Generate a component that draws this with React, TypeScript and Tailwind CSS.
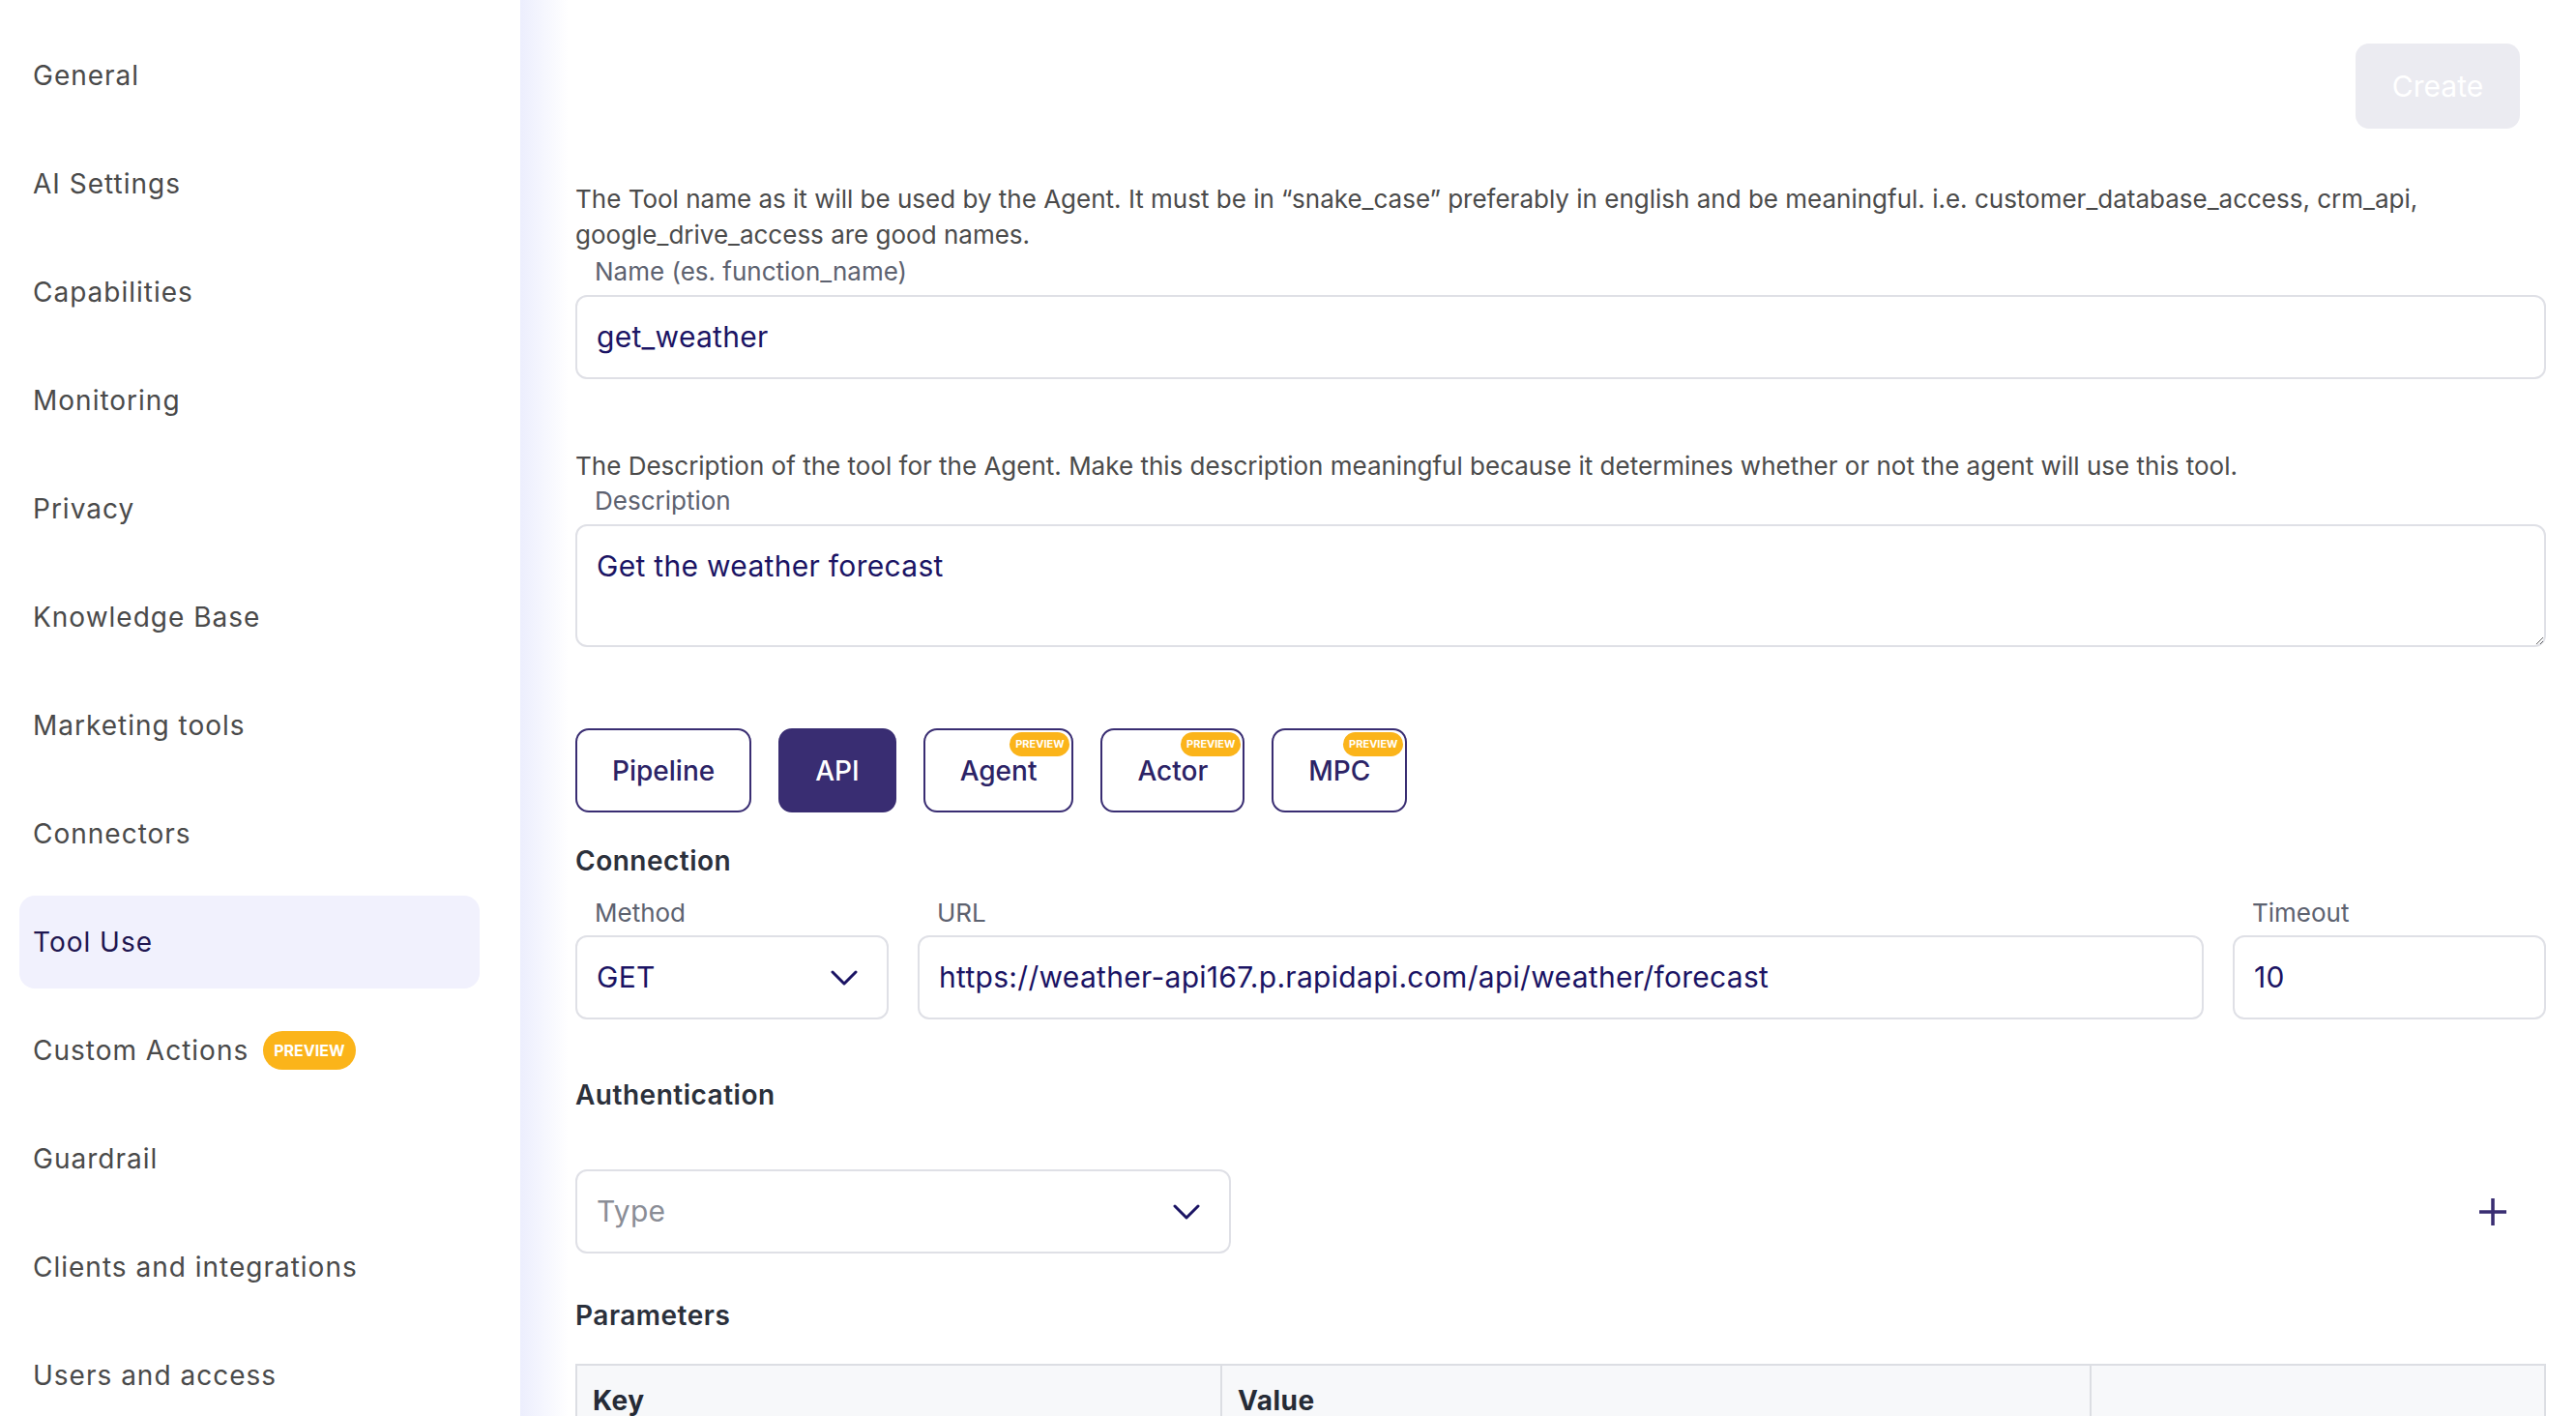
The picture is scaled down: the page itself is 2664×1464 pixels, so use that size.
import React from "react";

const navItems = [
  "General",
  "AI Settings",
  "Capabilities",
  "Monitoring",
  "Privacy",
  "Knowledge Base",
  "Marketing tools",
  "Connectors",
  "Tool Use",
  "Custom Actions",
  "Guardrail",
  "Clients and integrations",
  "Users and access",
];

function Chevron() {
  return (
    <svg width="28" height="16" viewBox="0 0 28 16" fill="none" className="shrink-0">
      <path d="M2 2 L14 14 L26 2" stroke="#1b1464" strokeWidth="3" strokeLinecap="round" strokeLinejoin="round" />
    </svg>
  );
}

function PreviewTag() {
  return (
    <span className="absolute right-[2px] top-[2px] flex h-[25px] w-[62px] items-center justify-center rounded-full bg-[#fbb41a] text-[11px] font-bold leading-none text-white">
      PREVIEW
    </span>
  );
}

function TypeButton({ label, active, preview }: { label: string; active?: boolean; preview?: boolean }) {
  return (
    <div
      className={
        active
          ? "relative flex h-[87px] items-center justify-center rounded-[14px] border-2 border-[#392d72] bg-[#392d72] px-[36px] text-[28px] font-medium text-white"
          : "relative flex h-[87px] items-center justify-center rounded-[14px] border-2 border-[#392d72] bg-white px-[36px] text-[28px] font-medium text-[#2c2366]"
      }
    >
      {label}
      {preview && <PreviewTag />}
    </div>
  );
}

export default function App() {
  return (
    <div className="flex h-[1464px] w-[2664px] overflow-hidden bg-white font-['Inter',sans-serif]">
      {/* Settings navigation */}
      <aside className="flex w-[538px] shrink-0 flex-col gap-4 bg-white pl-5 pr-[42px] pt-[30px]">
        {navItems.map((item) => (
          <div
            key={item}
            className={
              item === "Tool Use"
                ? "flex h-[96px] shrink-0 items-center rounded-2xl bg-[#f1f1fd] px-[14px] text-[28px] tracking-[1px] text-[#1f1650]"
                : "flex h-[96px] shrink-0 items-center px-[14px] text-[28px] tracking-[1px] text-[#4a4a4a]"
            }
          >
            <span>{item}</span>
            {item === "Custom Actions" && (
              <span className="ml-[15px] flex h-[40px] items-center rounded-full bg-[#fbb41a] px-[11px] text-[16px] font-bold tracking-normal text-white">
                PREVIEW
              </span>
            )}
          </div>
        ))}
      </aside>

      {/* Tool editor */}
      <main className="flex min-w-0 flex-1 flex-col bg-[linear-gradient(to_right,#eceefd,#ffffff_50px)] pl-[57px] pr-[31px] pt-[45px] [&>*]:shrink-0">
        <div className="flex justify-end pr-[27px]">
          <button className="h-[88px] w-[170px] rounded-[14px] bg-[#ebebf1] text-[30px] text-white">Create</button>
        </div>

        <p className="mt-[54px] text-[26px] leading-[37px] text-[#4b4b4b]">
          The Tool name as it will be used by the Agent. It must be in “snake_case” preferably in english and be meaningful. i.e. customer_database_access, crm_api, google_drive_access are good names.
        </p>
        <label className="mb-[6px] mt-[2px] pl-5 text-[26px] leading-[36px] text-[#5d6270]">Name (es. function_name)</label>
        <div className="flex h-[87px] items-center rounded-[12px] border-2 border-[#dfe0e6] bg-white pl-5 text-[30px] tracking-[0.3px] text-[#1b1464]">
          get_weather
        </div>

        <p className="mt-[71px] text-[26px] leading-[37px] text-[#4b4b4b]">
          The Description of the tool for the Agent. Make this description meaningful because it determines whether or not the agent will use this tool.
        </p>
        <label className="mb-[6px] pl-5 text-[26px] leading-[36px] text-[#5d6270]">Description</label>
        <textarea
          defaultValue="Get the weather forecast"
          className="block h-[127px] w-full rounded-[12px] border-2 border-[#dfe0e6] bg-white px-5 pt-[22px] text-[30px] leading-[38px] tracking-[0.3px] text-[#1b1464] outline-none"
        />

        <div className="mt-[84px] flex gap-[28px]">
          <TypeButton label="Pipeline" />
          <TypeButton label="API" active />
          <TypeButton label="Agent" preview />
          <TypeButton label="Actor" preview />
          <TypeButton label="MPC" preview />
        </div>

        <h2 className="mt-[30px] text-[28px] font-semibold leading-[40px] tracking-[0.5px] text-[#2b303b]">Connection</h2>
        <div className="mt-4 flex gap-[30px]">
          <div className="flex w-[324px] shrink-0 flex-col">
            <span className="mb-[5px] pl-5 text-[26px] leading-[36px] text-[#5d6270]">Method</span>
            <div className="flex h-[87px] items-center justify-between rounded-[12px] border-2 border-[#dfe0e6] bg-white pl-5 pr-[30px] text-[30px] tracking-[0.3px] text-[#1b1464]">
              <span>GET</span>
              <Chevron />
            </div>
          </div>
          <div className="flex min-w-0 flex-1 flex-col">
            <span className="mb-[5px] pl-5 text-[26px] leading-[36px] text-[#5d6270]">URL</span>
            <div className="flex h-[87px] items-center rounded-[12px] border-2 border-[#dfe0e6] bg-white pl-5 text-[30px] tracking-[0.3px] text-[#1b1464]">
              https://weather-api167.p.rapidapi.com/api/weather/forecast
            </div>
          </div>
          <div className="flex w-[324px] shrink-0 flex-col">
            <span className="mb-[5px] pl-5 text-[26px] leading-[36px] text-[#5d6270]">Timeout</span>
            <div className="flex h-[87px] items-center rounded-[12px] border-2 border-[#dfe0e6] bg-white pl-5 text-[30px] tracking-[0.3px] text-[#1b1464]">
              10
            </div>
          </div>
        </div>

        <h2 className="mt-[58px] text-[28px] font-semibold leading-[40px] tracking-[0.5px] text-[#2b303b]">Authentication</h2>
        <div className="mt-[57px] flex items-center justify-between">
          <div className="flex h-[87px] w-[678px] items-center justify-between rounded-[12px] border-2 border-[#dfe0e6] bg-white pl-5 pr-[30px] text-[30px] tracking-[0.3px] text-[#8a8d96]">
            <span>Type</span>
            <Chevron />
          </div>
          <button className="mr-[41px] flex h-[28px] w-[28px] items-center justify-center">
            <svg width="28" height="28" viewBox="0 0 28 28" fill="none">
              <path d="M14 0 V28 M0 14 H28" stroke="#392d72" strokeWidth="3.5" />
            </svg>
          </button>
        </div>

        <h2 className="mt-[44px] text-[28px] font-semibold leading-[40px] tracking-[0.5px] text-[#2b303b]">Parameters</h2>
        <div className="mt-[30px] grid grid-cols-[667px_899px_1fr] border-2 border-[#dcdee3] bg-[#f7f8fa]">
          <div className="flex h-[72px] items-center border-r-2 border-[#dcdee3] pl-4 text-[28px] font-bold tracking-[0.5px] text-[#262b36]">Key</div>
          <div className="flex h-[72px] items-center border-r-2 border-[#dcdee3] pl-4 text-[28px] font-bold tracking-[0.5px] text-[#262b36]">Value</div>
          <div className="h-[72px]" />
        </div>
      </main>
    </div>
  );
}
